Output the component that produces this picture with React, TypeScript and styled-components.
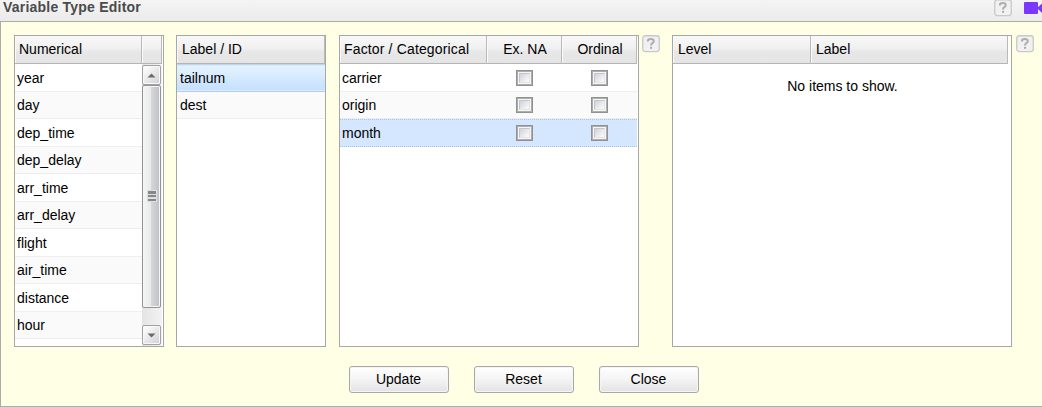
import React from 'react';
import styled, { createGlobalStyle } from 'styled-components';

const GlobalStyle = createGlobalStyle`
  * { box-sizing: border-box; }
  body { margin: 0; overflow: hidden; background: #ffffe6; }
`;

const Window = styled.div`
  width: 1042px;
  height: 407px;
  display: flex;
  flex-direction: column;
  overflow: hidden;
  font: 14px/18px 'Liberation Sans', Arial, sans-serif;
  color: #000;
`;

const TitleBar = styled.header`
  height: 21px;
  flex: none;
  display: flex;
  align-items: flex-start;
  padding-left: 3px;
  background: linear-gradient(#f4f4f4, #ebebeb);
`;

const Title = styled.h1`
  margin: -2px 0 0;
  flex: 1;
  font-size: 14px;
  line-height: 18px;
  letter-spacing: 0.22px;
  font-weight: bold;
  color: #4b4b4b;
`;

const TitleTools = styled.div`
  display: flex;
  width: 48px;
  gap: 12px;
  overflow: hidden;
  svg { flex: none; }
  svg:first-child { margin-top: -1px; }
`;

const Body = styled.main`
  flex: 1;
  display: flex;
  flex-direction: column;
  background: #ffffe6;
  border: 1px solid #ababab;
  border-right: 0;
  padding: 13px 0 0 13px;
`;

const Panels = styled.div`
  display: flex;
  height: 312px;
`;

const Panel = styled.section<{ $w: number; $gap: number }>`
  width: ${p => p.$w}px;
  margin-right: ${p => p.$gap}px;
  flex: none;
  height: 312px;
  border: 1px solid #a7a7a7;
  background: #fff;
  display: flex;
  flex-direction: column;
  overflow: hidden;
`;

const HeaderRow = styled.div`
  display: flex;
  flex: none;
  height: 28px;
  background: #fffff4;
`;

const HeaderCell = styled.div<{ $w: number; $pad?: number; $center?: boolean; $spacing?: number }>`
  width: ${p => p.$w}px;
  flex: none;
  height: 28px;
  padding: 0 ${p => (p.$center ? 0 : 4)}px 0 ${p => p.$pad ?? 4}px;
  line-height: 26px;
  letter-spacing: ${p => p.$spacing ?? 0}px;
  text-align: ${p => (p.$center ? 'center' : 'left')};
  white-space: nowrap;
  border-right: 1px solid #b9b9b9;
  border-bottom: 1px solid #b5b5b5;
  box-shadow: inset 1px 0 #fafafa;
  background: linear-gradient(#f8f8f8 0, #f0f0f0 45%, #e7e7e7 60%, #e5e5e5 100%);
`;

const Content = styled.div`
  display: flex;
  flex: 1;
  min-height: 0;
`;

const Rows = styled.div<{ $w: number }>`
  width: ${p => p.$w}px;
  flex: none;
  overflow: hidden;
`;

type Tone = 'plain' | 'alt' | 'selected' | 'hover';

const tones: Record<Tone, string> = {
  plain: 'background: #fff; border-bottom: 1px solid #efefef; padding-top: 1px;',
  alt: 'background: #fafafa; border-bottom: 1px solid #ededed;',
  selected:
    'background: linear-gradient(#e6f3ff, #c4dfff); border-top: 1px solid #bdd5f3; border-bottom: 1px solid #b5cdec; box-shadow: inset 0 1px #d8eaff, inset 0 -1px #dcecff;',
  hover: 'background: #d5e7ff; border-top: 1px dotted #a9c4ea; border-bottom: 1px dotted #a9c4ea;',
};

const Row = styled.div<{ $tone: Tone }>`
  height: 27.5px;
  display: flex;
  align-items: center;
  ${p => tones[p.$tone]}
`;

const NameCell = styled.div<{ $w?: number; $pad?: number }>`
  width: ${p => (p.$w ? p.$w + 'px' : 'auto')};
  padding-left: ${p => p.$pad ?? 2}px;
`;

const CheckCell = styled.div`
  width: 75px;
  display: flex;
  justify-content: center;
`;

const CheckBox = styled.span`
  width: 17px;
  height: 16px;
  padding: 2px;
  border: 1px solid #919191;
  box-shadow: inset 0 0 0 1px #adadad;
  background: #f6f6f6;
  display: flex;
  &::before {
    content: '';
    flex: 1;
    margin: 0;
    border: 1px solid;
    border-color: #c3c6cb #e4e4e6 #e4e4e6 #c3c6cb;
    background: linear-gradient(135deg, #cfd2da, #f7f7f7 85%);
  }
`;

const ScrollBar = styled.div`
  width: 20px;
  height: 282px;
  padding: 1px 0;
  display: flex;
  flex-direction: column;
  background: linear-gradient(90deg, #e4e4e4, #f3f3f3);
`;

const ScrollButton = styled.div`
  width: 19px;
  height: 20px;
  flex: none;
  display: flex;
  align-items: center;
  justify-content: center;
  border: 1px solid #a2a2a2;
  border-radius: 2px;
  box-shadow: inset 0 0 0 1px #f8f8f8;
  background: linear-gradient(135deg, #f8f8f8 20%, #cfd0d2);
`;

const Thumb = styled.div`
  width: 19px;
  height: 223px;
  flex: none;
  display: flex;
  align-items: center;
  justify-content: center;
  padding-bottom: 2px;
  border: 1px solid #929497;
  border-radius: 2px;
  box-shadow: inset 0 0 0 1px #f5f5f5;
  background: linear-gradient(90deg, #f5f5f5 0, #e9e9ea 45%, #d5d6d9 50%, #c0c2c6 95%);
`;

const Track = styled.div`
  flex: 1;
`;

const Empty = styled.p`
  margin: 13px 0 0;
  width: 100%;
  padding-left: 1px;
  text-align: center;
  line-height: 18px;
`;

const Buttons = styled.div`
  display: flex;
  gap: 25px;
  padding: 19px 0 0 335px;
`;

const Button = styled.button`
  width: 100px;
  height: 27px;
  padding: 0 1px 1px 0;
  border: 1px solid #a8a8ac;
  border-radius: 3px;
  font: inherit;
  color: #000;
  box-shadow: inset 0 0 0 1px #f5f5f5;
  background: linear-gradient(#fff, #f4f4f4 50%, #e3e3e3);
`;

const HelpSlot = styled.div<{ $w: number }>`
  width: ${p => p.$w}px;
  height: 18px;
  flex: none;
  display: flex;
`;

const HelpIcon = () => (
  <svg width="18" height="18" viewBox="0 0 18 18">
    <rect x="0.75" y="0.75" width="16.5" height="15.8" rx="2.5" fill="#f1f1f1" stroke="#c8c8c8" strokeWidth="1.3" />
    <path d="M5.9 6.6V5.7Q6.2 4.1 8.9 4.1T11.8 6.2Q11.8 7.3 10.4 8.1T9 10.4" fill="none" stroke="#adadad" strokeWidth="2" />
    <rect x="8" y="11.8" width="2.1" height="2" fill="#adadad" />
  </svg>
);

const VideoIcon = () => (
  <svg width="22" height="17" viewBox="0 0 22 17">
    <rect x="0" y="2" width="14" height="12" rx="1" fill="#7a37ff" />
    <path d="M13 8L18 3.5H20V13H18Z" fill="#7a37ff" />
  </svg>
);

const Arrow = ({ down }: { down?: boolean }) => (
  <svg width="9" height="5" viewBox="0 0 9 5">
    <path d={down ? 'M0.5 0.5H8.5L4.5 4.5Z' : 'M0.5 4.5H8.5L4.5 0.5Z'} fill="#6a6a6a" />
  </svg>
);

const Grip = () => (
  <svg width="10" height="12" viewBox="0 0 10 12">
    <path d="M0 0H10V12H0Z" fill="#dedfe0" />
    <path d="M1 1H9V4H1ZM1 5H9V7H1ZM1 9H9V11H1Z" fill="#85878a" />
  </svg>
);

const numerical = ['year', 'day', 'dep_time', 'dep_delay', 'arr_time', 'arr_delay', 'flight', 'air_time', 'distance', 'hour', ''];
const factors: [string, Tone][] = [['carrier', 'plain'], ['origin', 'alt'], ['month', 'hover']];

export default function App() {
  return (
    <>
      <GlobalStyle />
      <Window>
        <TitleBar>
          <Title>Variable Type Editor</Title>
          <TitleTools>
            <HelpIcon />
            <VideoIcon />
          </TitleTools>
        </TitleBar>
        <Body>
          <Panels>
            <Panel $w={150} $gap={12}>
              <HeaderRow>
                <HeaderCell $w={127}>Numerical</HeaderCell>
                <HeaderCell $w={20} />
              </HeaderRow>
              <Content>
                <Rows $w={127}>
                  {numerical.map((name, i) => (
                    <Row key={i} $tone={i % 2 ? 'alt' : 'plain'}>
                      <NameCell>{name}</NameCell>
                    </Row>
                  ))}
                </Rows>
                <ScrollBar>
                  <ScrollButton><Arrow /></ScrollButton>
                  <Thumb><Grip /></Thumb>
                  <Track />
                  <ScrollButton><Arrow down /></ScrollButton>
                </ScrollBar>
              </Content>
            </Panel>
            <Panel $w={150} $gap={13}>
              <HeaderRow>
                <HeaderCell $w={148} $pad={5}>Label / ID</HeaderCell>
              </HeaderRow>
              <Content>
                <Rows $w={148}>
                  <Row $tone="selected"><NameCell $pad={3}>tailnum</NameCell></Row>
                  <Row $tone="alt"><NameCell $pad={3}>dest</NameCell></Row>
                </Rows>
              </Content>
            </Panel>
            <Panel $w={300} $gap={3}>
              <HeaderRow>
                <HeaderCell $w={147} $spacing={0.15}>Factor / Categorical</HeaderCell>
                <HeaderCell $w={75} $pad={2} $center>Ex. NA</HeaderCell>
                <HeaderCell $w={75} $pad={2} $center>Ordinal</HeaderCell>
              </HeaderRow>
              <Content>
                <Rows $w={297}>
                  {factors.map(([name, tone]) => (
                    <Row key={name} $tone={tone}>
                      <NameCell $w={147}>{name}</NameCell>
                      <CheckCell><CheckBox /></CheckCell>
                      <CheckCell><CheckBox /></CheckCell>
                    </Row>
                  ))}
                </Rows>
              </Content>
            </Panel>
            <HelpSlot $w={30}><HelpIcon /></HelpSlot>
            <Panel $w={340} $gap={4}>
              <HeaderRow>
                <HeaderCell $w={138} $pad={5}>Level</HeaderCell>
                <HeaderCell $w={197} $pad={5}>Label</HeaderCell>
              </HeaderRow>
              <Content>
                <Empty>No items to show.</Empty>
              </Content>
            </Panel>
            <HelpSlot $w={18}><HelpIcon /></HelpSlot>
          </Panels>
          <Buttons>
            <Button>Update</Button>
            <Button>Reset</Button>
            <Button>Close</Button>
          </Buttons>
        </Body>
      </Window>
    </>
  );
}
